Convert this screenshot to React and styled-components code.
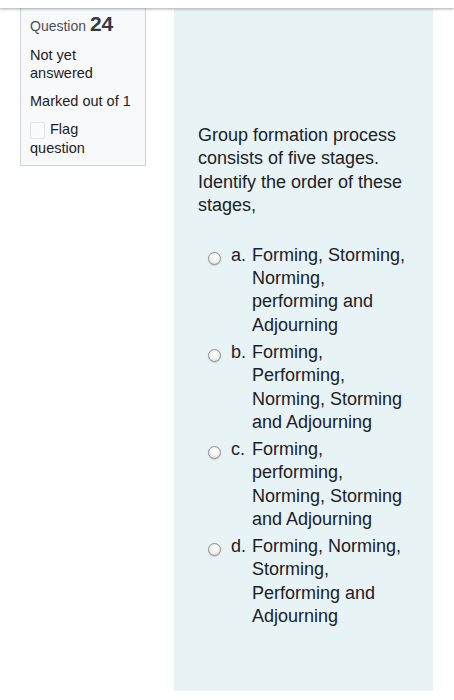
import React from "react";
import styled, { createGlobalStyle } from "styled-components";

const Global = createGlobalStyle`
  html, body { margin: 0; padding: 0; background: #ffffff; }
  body { font-family: "Liberation Sans", Arial, Helvetica, sans-serif; color: #1d2125; }
`;

const Header = styled.div`
  height: 8px;
  background: #ffffff;
  box-shadow: 0 1px 3px rgba(0, 0, 0, 0.35);
  position: relative;
  z-index: 2;
`;

const Main = styled.div`
  display: flex;
  align-items: flex-start;
  padding-left: 20px;
`;

const InfoBox = styled.div`
  box-sizing: border-box;
  width: 126px;
  padding: 3px 13px 8px 9px;
  background: #f8f9fa;
  border: 1px solid #ced4da;
  border-top: none;
  font-size: 14.5px;
  line-height: 18px;
  color: #1d2125;
`;

const QNo = styled.h3`
  margin: 0;
  font-weight: normal;
  font-size: 14px;
  line-height: 26px;
  color: #495057;
  span {
    font-size: 21px;
    font-weight: bold;
    color: #343a40;
  }
`;

const InfoLine = styled.div`
  margin-top: ${(p) => p.$gap}px;
`;

const FlagBox = styled.span`
  display: inline-block;
  box-sizing: border-box;
  width: 15px;
  height: 17px;
  margin-right: 5px;
  vertical-align: -5px;
  border: 1px solid #e2e5e8;
  border-radius: 2px;
  background: #fbfbfb;
`;

const Panel = styled.div`
  box-sizing: border-box;
  margin-left: 28px;
  margin-top: 1px;
  width: 259px;
  height: 682px;
  padding: 115px 24px 0 24px;
  background: #e7f3f5;
  font-size: 18px;
  line-height: 23.4px;
  color: #1d2125;
`;

const QText = styled.div`
  width: 225px;
  margin-bottom: 26px;
`;

const Options = styled.div`
  display: flex;
  flex-direction: column;
  gap: 3.5px;
  padding-left: 10px;
`;

const Option = styled.div`
  display: flex;
  align-items: flex-start;
`;

const Radio = styled.span`
  flex: none;
  box-sizing: border-box;
  width: 13px;
  height: 13px;
  margin-top: 8px;
  margin-right: 10px;
  border-radius: 50%;
  border: 1px solid #8e8e8e;
  background: radial-gradient(circle at 50% 35%, #ffffff 0%, #f0f0f0 55%, #cfcfcf 100%);
  box-shadow: 0 1px 1px rgba(0, 0, 0, 0.15);
`;

const Letter = styled.span`
  flex: none;
  width: 21px;
`;

const OptText = styled.span`
  width: 158px;
`;

const options = [
  ["a.", "Forming, Storming, Norming, performing and Adjourning"],
  ["b.", "Forming, Performing, Norming, Storming and Adjourning"],
  ["c.", "Forming, performing, Norming, Storming and Adjourning"],
  ["d.", "Forming, Norming, Storming, Performing and Adjourning"],
];

export default function App() {
  return (
    <>
      <Global />
      <Header />
      <Main>
        <InfoBox>
          <QNo>
            Question <span>24</span>
          </QNo>
          <InfoLine $gap={7}>Not yet answered</InfoLine>
          <InfoLine $gap={10}>Marked out of 1</InfoLine>
          <InfoLine $gap={10}>
            <FlagBox />
            Flag question
          </InfoLine>
        </InfoBox>
        <Panel>
          <QText>
            Group formation process consists of five stages. Identify the order of these stages,
          </QText>
          <Options>
            {options.map(([l, t]) => (
              <Option key={l}>
                <Radio />
                <Letter>{l}</Letter>
                <OptText>{t}</OptText>
              </Option>
            ))}
          </Options>
        </Panel>
      </Main>
    </>
  );
}
